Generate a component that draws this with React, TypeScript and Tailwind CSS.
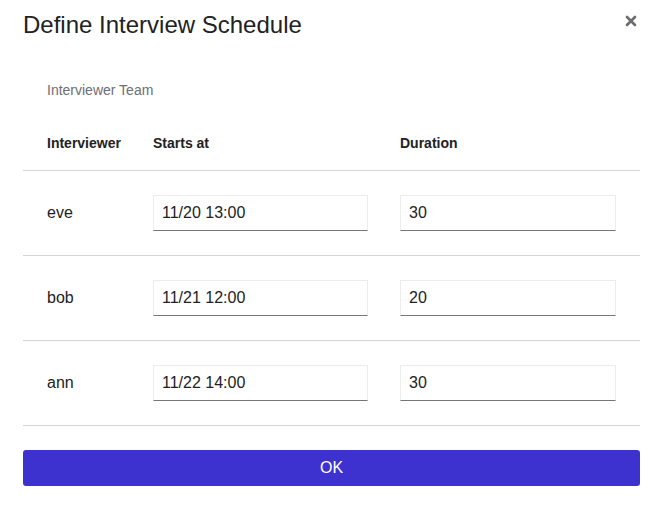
const rows = [
  { name: "eve", start: "11/20 13:00", duration: "30" },
  { name: "bob", start: "11/21 12:00", duration: "20" },
  { name: "ann", start: "11/22 14:00", duration: "30" },
];

const Field = ({ value, w }: { value: string; w: string }) => (
  <input
    readOnly
    value={value}
    className={`${w} h-[36px] border border-[#ececec] border-b-[#767676] bg-white pl-[8px] text-[16px] text-[#222] outline-none`}
  />
);

const App = () => {
  return (
    <div className="w-[656px] h-[505px] bg-white font-['Liberation_Sans',Arial,sans-serif] text-[#222]">
      <div className="relative pl-[23px] pr-[16px] pt-[9px]">
        <h1 className="text-[24px] leading-[32px] text-[#222]">
          Define Interview Schedule
        </h1>
        <button className="absolute right-[18px] top-[14px] flex h-[14px] w-[14px] items-center justify-center text-[#6b6b70]">
          <svg viewBox="0 0 12 12" width="12" height="12">
            <path
              d="M2 2 L10 10 M10 2 L2 10"
              stroke="currentColor"
              strokeWidth="2.6"
              strokeLinecap="round"
            />
          </svg>
        </button>

        <div className="mt-[39px] pl-[24px] text-[14px] leading-[20px] text-[#6e6e73]">
          Interviewer Team
        </div>

        <div className="mt-[17px] flex h-[54px] items-center border-b border-[#d4d4d4] pl-[24px] text-[14px] font-bold">
          <div className="w-[106px]">Interviewer</div>
          <div className="w-[247px]">Starts at</div>
          <div>Duration</div>
        </div>

        {rows.map((r) => (
          <div
            key={r.name}
            className="flex h-[85px] items-center border-b border-[#d4d4d4] pl-[24px] text-[16px]"
          >
            <div className="w-[106px]">{r.name}</div>
            <div className="w-[247px]">
              <Field value={r.start} w="w-[215px]" />
            </div>
            <div>
              <Field value={r.duration} w="w-[216px]" />
            </div>
          </div>
        ))}

        <button className="mt-[24px] flex h-[36px] w-full items-center justify-center rounded-[3px] bg-[#3d32cf] text-[16px] text-white">
          OK
        </button>
      </div>
    </div>
  );
};

export default App;
